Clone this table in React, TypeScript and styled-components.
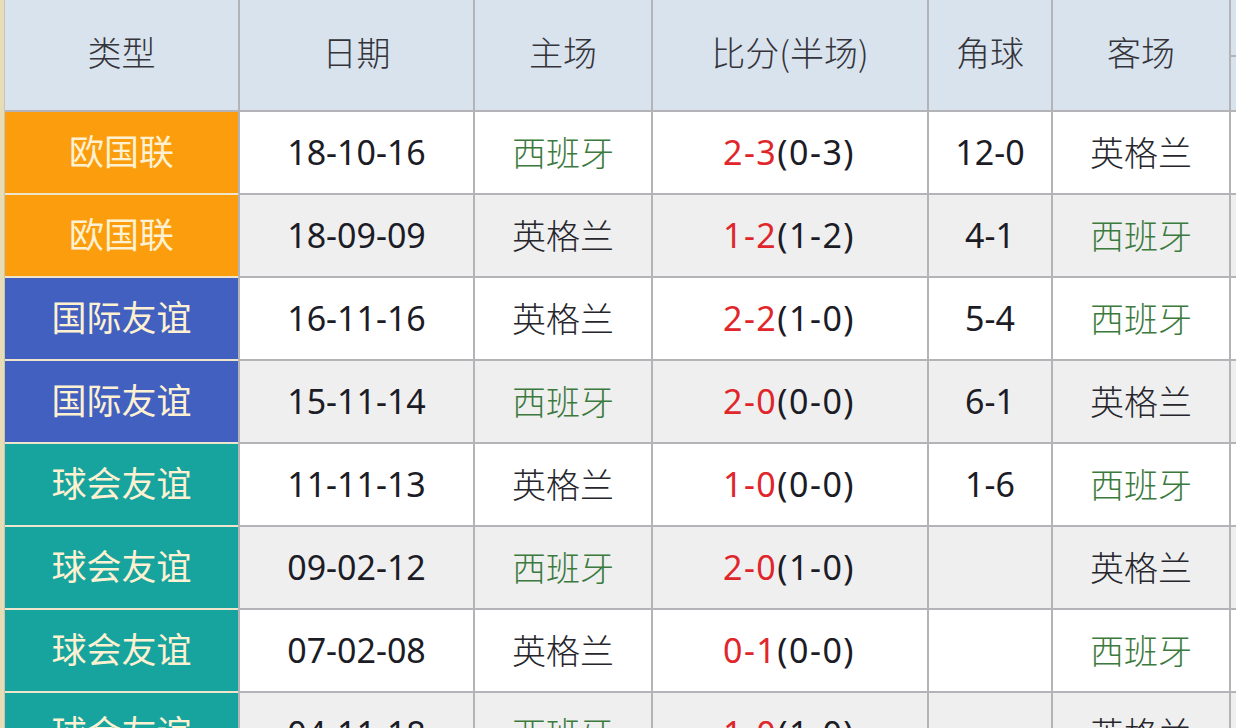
import React from "react";
import styled, { createGlobalStyle } from "styled-components";

const Global = createGlobalStyle`
  html, body { margin: 0; padding: 0; background: #ffffff; overflow: hidden; }
  body { font-family: "Noto Sans", "Noto Sans CJK SC", sans-serif; }
`;

const Page = styled.div`
  width: 1236px;
  height: 728px;
  overflow: hidden;
  display: flex;
  background: #ffffff;
`;

const Strip = styled.div`
  width: 4px;
  flex: none;
  background: #e6dcb6;
  border-right: 1px solid #c9c4b4;
`;

const Grid = styled.div`
  display: grid;
  grid-template-columns: 233px 233px 176px 274px 122px 176px 12px;
  grid-auto-rows: 81px;
  grid-template-rows: 110px;
  gap: 2px;
  background: #b4b4b8;
  align-content: start;
  flex: none;
`;

const HeadCell = styled.div`
  background: #d9e3ee;
  display: flex;
  align-items: center;
  justify-content: center;
  padding-bottom: 8px;
  box-sizing: border-box;
  font-family: "Noto Sans CJK SC", sans-serif;
  font-size: 34px;
  font-weight: 300;
  color: #34343a;
`;

const EdgeHead = styled.div`
  background: #d9e3ee;
  display: grid;
  grid-template-rows: 57px 1fr;
  & > div:first-child { border-bottom: 2px solid #b4b4b8; }
`;

const TypeCell = styled.div<{ $bg: string }>`
  background: ${(p) => p.$bg};
  box-shadow: 0 2px 0 #efe4cc;
  position: relative;
  z-index: 1;
  display: flex;
  align-items: center;
  justify-content: center;
  font-family: "Noto Sans CJK SC", sans-serif;
  font-size: 35px;
  font-weight: 400;
  color: #fdf1d2;
  padding-bottom: 6px;
  box-sizing: border-box;
`;

const Cell = styled.div<{ $alt: boolean }>`
  background: ${(p) => (p.$alt ? "#efeff0" : "#ffffff")};
  display: flex;
  align-items: center;
  justify-content: center;
  font-size: 34px;
  color: #1c1c26;
  padding-bottom: 2px;
  box-sizing: border-box;
  white-space: nowrap;
`;

const Num = styled.span`
  font-family: "Noto Sans", sans-serif;
  font-size: 34px;
  color: #1c1c26;
`;

const Score = styled(Num)`
  letter-spacing: 1.5px;
  margin-left: -2px;
`;

const Team = styled.span<{ $green: boolean }>`
  font-family: "Noto Sans CJK SC", sans-serif;
  font-weight: 300;
  font-size: 34px;
  color: ${(p) => (p.$green ? "#3b7a3c" : "#26262c")};
`;

const Full = styled.span`
  color: #e0262b;
`;

const types: Record<string, string> = {
  欧国联: "#fb9d0c",
  国际友谊: "#4260c0",
  球会友谊: "#17a49f",
};

const rows = [
  ["欧国联", "18-10-16", "西班牙", "2-3", "0-3", "12-0", "英格兰"],
  ["欧国联", "18-09-09", "英格兰", "1-2", "1-2", "4-1", "西班牙"],
  ["国际友谊", "16-11-16", "英格兰", "2-2", "1-0", "5-4", "西班牙"],
  ["国际友谊", "15-11-14", "西班牙", "2-0", "0-0", "6-1", "英格兰"],
  ["球会友谊", "11-11-13", "英格兰", "1-0", "0-0", "1-6", "西班牙"],
  ["球会友谊", "09-02-12", "西班牙", "2-0", "1-0", "", "英格兰"],
  ["球会友谊", "07-02-08", "英格兰", "0-1", "0-0", "", "西班牙"],
  ["球会友谊", "04-11-18", "西班牙", "1-0", "1-0", "", "英格兰"],
];

const headers = ["类型", "日期", "主场", "比分(半场)", "角球", "客场"];

export default function App() {
  return (
    <Page>
      <Global />
      <Strip />
      <Grid>
        {headers.map((h) => (
          <HeadCell key={h}>{h}</HeadCell>
        ))}
        <EdgeHead>
          <div />
          <div />
        </EdgeHead>
        {rows.map((r, i) => {
          const alt = i % 2 === 1;
          return (
            <React.Fragment key={i}>
              <TypeCell $bg={types[r[0]]}>{r[0]}</TypeCell>
              <Cell $alt={alt}>
                <Num>{r[1]}</Num>
              </Cell>
              <Cell $alt={alt}>
                <Team $green={r[2] === "西班牙"}>{r[2]}</Team>
              </Cell>
              <Cell $alt={alt}>
                <Score>
                  <Full>{r[3]}</Full>({r[4]})
                </Score>
              </Cell>
              <Cell $alt={alt}>
                <Num>{r[5]}</Num>
              </Cell>
              <Cell $alt={alt}>
                <Team $green={r[6] === "西班牙"}>{r[6]}</Team>
              </Cell>
              <Cell $alt={alt} />
            </React.Fragment>
          );
        })}
      </Grid>
    </Page>
  );
}
